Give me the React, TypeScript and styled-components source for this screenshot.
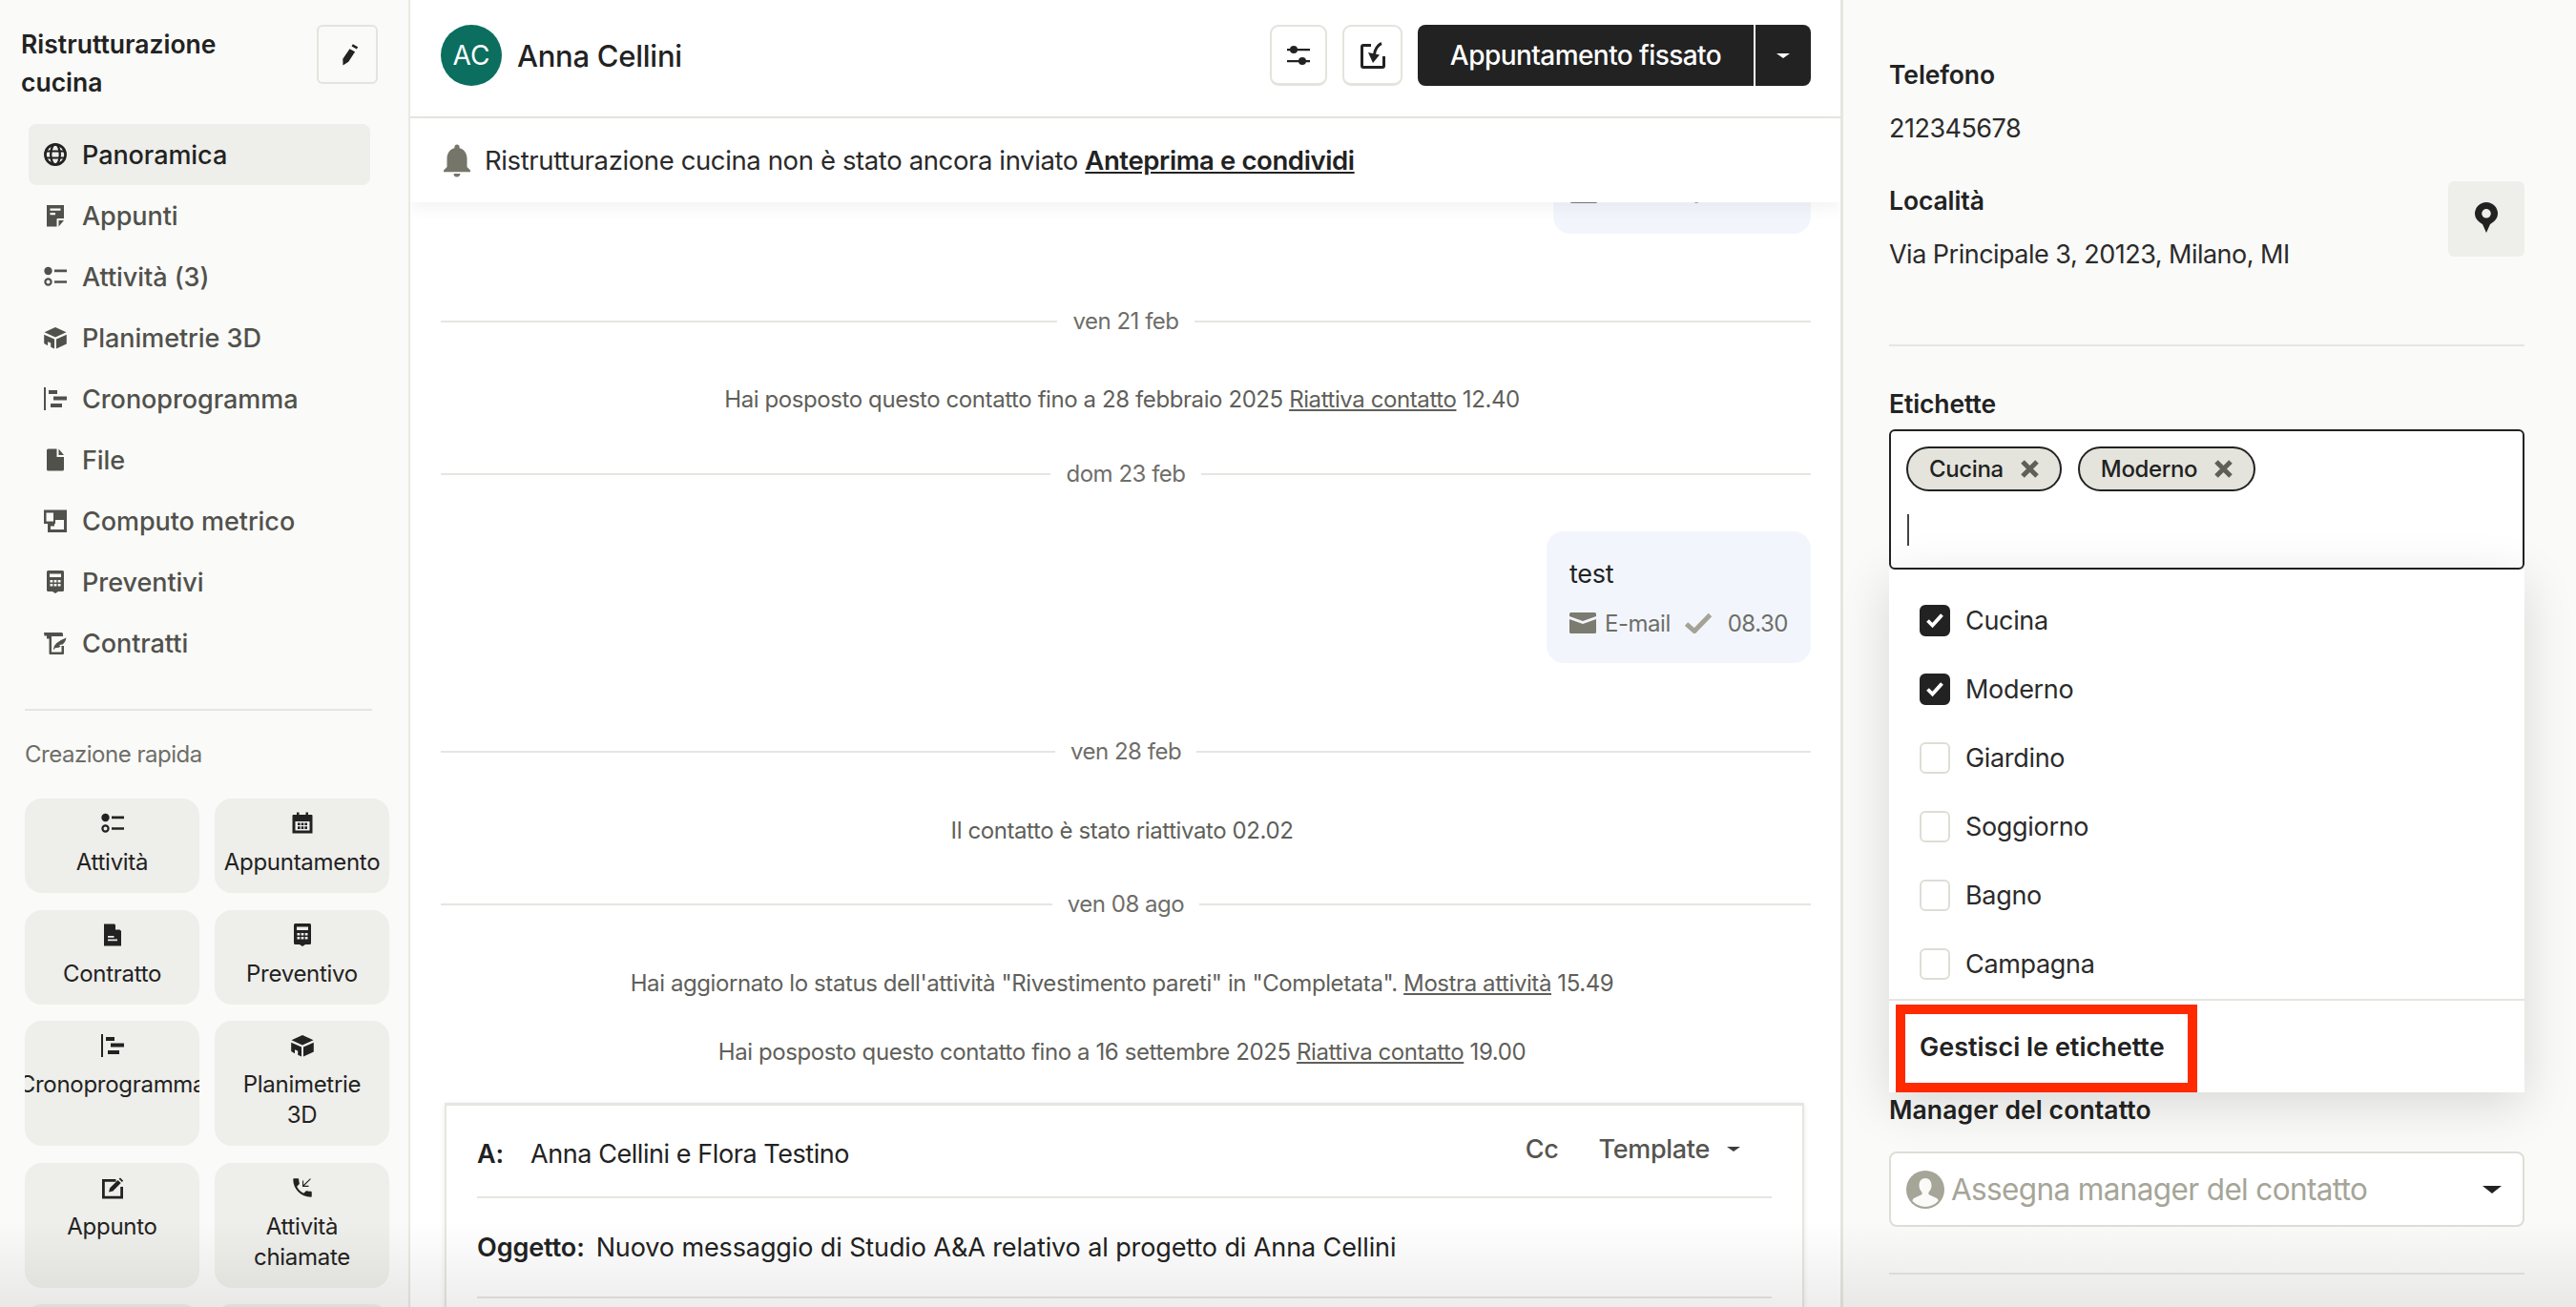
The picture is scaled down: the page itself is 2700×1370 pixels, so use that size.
import React, { FC, ReactNode } from 'react'
import styled, { createGlobalStyle } from 'styled-components'
import { MdPhoneCallback, MdNotifications } from 'react-icons/md'

const GlobalStyle = createGlobalStyle`
  html, body {
    margin: 0;
    height: 100%;
    overflow: hidden;
    background: #fff;
  }
  body {
    font-family: Inter, "Noto Sans", "Liberation Sans", sans-serif;
    font-size: 26px;
    letter-spacing: -0.01em;
    color: #222;
  }
  * { box-sizing: border-box; }
`

const Page = styled.div`
  position: relative;
  display: grid;
  grid-template-columns: 430px 1502px 768px;
  width: 2700px;
  height: 1370px;
  overflow: hidden;
`

/* bottom fade that sits over all the columns */
const BottomFade = styled.div`
  position: absolute;
  left: 0;
  right: 0;
  bottom: 0;
  height: 90px;
  background: linear-gradient(rgba(0, 0, 0, 0), rgba(0, 0, 0, 0.07));
  pointer-events: none;
  z-index: 5;
`

/* sidebar */
const Sidebar = styled.aside`
  background: #fafaf8;
  border-right: 2px solid #e9e8e3;
  overflow: hidden;
`

const SideHead = styled.div`
  display: flex;
  justify-content: space-between;
  align-items: flex-start;
  padding: 26px 32px 0 22px;
  height: 130px;
`

const ProjectTitle = styled.h1`
  margin: 0;
  width: 250px;
  font-size: 26.5px;
  line-height: 40px;
  font-weight: 600;
  letter-spacing: 0;
`

const EditBtn = styled.button`
  width: 64px;
  height: 62px;
  display: flex;
  align-items: center;
  justify-content: center;
  background: #fafaf8;
  border: 2px solid #e4e3dd;
  border-radius: 6px;
  color: #222;
  padding: 0;
`

const Nav = styled.nav`
  display: flex;
  flex-direction: column;
  width: 358px;
  margin-left: 30px;
`

const NavItem = styled.a<{ $active?: boolean }>`
  display: flex;
  align-items: center;
  gap: 16px;
  height: 64px;
  padding-left: 16px;
  border-radius: 8px;
  font-size: 27px;
  font-weight: 500;
  letter-spacing: -0.002em;
  color: ${(p) => (p.$active ? '#222' : '#51514c')};
  background: ${(p) => (p.$active ? '#eeeeea' : 'transparent')};
`

const SideRule = styled.hr`
  margin: 37px 38px 0 26px;
  border: 0;
  border-top: 2px solid #e6e5e0;
`

const QuickTitle = styled.div`
  margin: 29px 0 29px 26px;
  font-size: 24px;
  line-height: 34px;
  letter-spacing: -0.02em;
  color: #6e6e69;
`

const QuickGrid = styled.div`
  display: grid;
  grid-template-columns: 183px 183px;
  column-gap: 16px;
  row-gap: 17.5px;
  margin-left: 26px;
`

const QuickCard = styled.button<{ $tall?: boolean }>`
  display: flex;
  flex-direction: column;
  align-items: center;
  height: ${(p) => (p.$tall ? 131 : 99)}px;
  padding: 14px 14px 0;
  background: #eeeeea;
  border: 0;
  border-radius: 18px;
  overflow: hidden;
  color: #222;
  font: inherit;
  letter-spacing: -0.012em;
  font-size: 24px;
  line-height: 32px;
  text-align: center;
`

const QuickLabel = styled.span`
  margin-top: 13px;
`

/* main column */
const Main = styled.main`
  display: flex;
  flex-direction: column;
  min-width: 0;
  background: #fff;
  border-right: 3px solid #e6e5df;
  overflow: hidden;
`

const Header = styled.header`
  display: flex;
  align-items: center;
  height: 124px;
  flex: none;
  padding: 0 31px 6px 32px;
  border-bottom: 2px solid #e6e5e0;
  gap: 16px;
`

const Avatar = styled.div`
  width: 64px;
  height: 64px;
  border-radius: 50%;
  background: #0b6e5f;
  color: #fff;
  font-size: 28px;
  display: flex;
  align-items: center;
  justify-content: center;
  letter-spacing: 0;
`

const ContactName = styled.div`
  flex: 1;
  font-size: 31px;
  font-weight: 500;
`

const IconBtn = styled.button<{ $w: number }>`
  width: ${(p) => p.$w}px;
  height: 64px;
  display: flex;
  align-items: center;
  justify-content: center;
  padding: 0;
  background: #fff;
  border: 2px solid #e4e3dd;
  border-bottom-width: 3px;
  border-radius: 9px;
  color: #222;
`

const SplitBtn = styled.div`
  display: flex;
  height: 64px;
  gap: 2px;
  background: #fff;
`

const StatusBtn = styled.button`
  width: 352px;
  background: #222;
  color: #fff;
  border: 0;
  border-radius: 8px 0 0 8px;
  font: inherit;
  font-size: 28px;
  font-weight: 500;
  letter-spacing: -0.02em;
`

const StatusCaret = styled.button`
  width: 58px;
  background: #222;
  color: #fff;
  border: 0;
  border-radius: 0 8px 8px 0;
  display: flex;
  align-items: center;
  justify-content: center;
`

const Caret = styled.i<{ $w: number; $c?: string }>`
  display: inline-block;
  width: 0;
  height: 0;
  border-left: ${(p) => p.$w}px solid transparent;
  border-right: ${(p) => p.$w}px solid transparent;
  border-top: ${(p) => Math.round(p.$w * 0.75)}px solid ${(p) => p.$c ?? 'currentColor'};
`

const Notice = styled.div`
  position: relative;
  z-index: 2;
  flex: none;
  display: flex;
  align-items: center;
  gap: 8px;
  height: 88px;
  padding: 0 32px 0 28px;
  background: #fff;
  box-shadow: 0 6px 16px rgba(0, 0, 0, 0.05);
  font-size: 27.5px;
  letter-spacing: -0.014em;
  color: #2a2a2a;
`

const NoticeLink = styled.a`
  font-weight: 600;
  text-decoration: underline;
  color: #222;
`

const Feed = styled.div`
  flex: 1;
  display: flex;
  flex-direction: column;
  padding: 0 31px 0 32px;
  min-height: 0;
`

const BubbleStub = styled.div`
  align-self: flex-end;
  width: 270px;
  height: 33px;
  overflow: hidden;
  flex: none;
  background: #f2f6fc;
  border-radius: 0 0 18px 18px;
  padding: 0 18px;
`

const StubMeta = styled.div`
  margin-top: -43px;
`

const DayRow = styled.div<{ $top: number }>`
  display: flex;
  align-items: center;
  gap: 16px;
  margin-top: ${(p) => p.$top}px;
  flex: none;
  font-size: 24px;
  line-height: 34px;
  letter-spacing: -0.02em;
  color: #6e6e69;
  &::before,
  &::after {
    content: '';
    flex: 1;
    border-top: 2px solid #e6e5e0;
  }
`

const LogLine = styled.div<{ $top: number }>`
  margin-top: ${(p) => p.$top}px;
  padding-right: 8px;
  flex: none;
  text-align: center;
  font-size: 24px;
  line-height: 34px;
  letter-spacing: -0.017em;
  color: #5f5f5a;
  a {
    text-decoration: underline;
  }
`

const Bubble = styled.div`
  align-self: flex-end;
  flex: none;
  width: 277px;
  height: 138px;
  margin-top: 43px;
  padding: 27px 24px 0;
  background: #f2f6fc;
  border-radius: 18px;
`

const BubbleText = styled.div`
  font-size: 27px;
  line-height: 36px;
  color: #222;
`

const BubbleMeta = styled.div`
  display: flex;
  align-items: center;
  margin-top: 16px;
  height: 34px;
  font-size: 24px;
  letter-spacing: -0.02em;
  color: #6e6e69;
`

const MetaLabel = styled.span`
  margin-left: 9px;
  width: 85px;
`

const MetaTime = styled.span`
  margin-left: 17px;
`

const Composer = styled.section`
  flex: none;
  margin: 36px 7px 0 4px;
  padding: 0 32px;
  height: 300px;
  border: 2px solid #e6e5e0;
  border-top-width: 3px;
  box-shadow: 0 1px 6px rgba(0, 0, 0, 0.08);
  background: #fff;
`

const ComposerRow = styled.div<{ $h: number; $pt?: number }>`
  display: flex;
  align-items: center;
  height: ${(p) => p.$h}px;
  padding-top: ${(p) => p.$pt ?? 0}px;
  border-bottom: 2px solid #e6e5e0;
  font-size: 27px;
  letter-spacing: -0.004em;
`

const FieldKey = styled.strong<{ $w?: number }>`
  font-weight: 600;
  width: ${(p) => (p.$w ? `${p.$w}px` : 'auto')};
  margin-right: ${(p) => (p.$w ? 0 : 12)}px;
`

const Recipients = styled.span`
  letter-spacing: -0.016em;
`

const ComposerTools = styled.div`
  margin-left: auto;
  margin-top: -10px;
  margin-right: 33px;
  display: flex;
  align-items: center;
  color: #55554f;
  font-weight: 500;
  letter-spacing: -0.012em;
`

const ToolLabel = styled.span<{ $gap: number }>`
  margin-right: ${(p) => p.$gap}px;
`

/* right panel */
const Panel = styled.aside`
  background: #fafaf8;
  padding: 61px 54px 0 48px;
  overflow: hidden;
`

const PanelLabel = styled.div`
  font-size: 26.5px;
  line-height: 34px;
  font-weight: 600;
  letter-spacing: -0.004em;
  color: #222;
`

const PanelValue = styled.div`
  margin-top: 23px;
  font-size: 27px;
  line-height: 34px;
  letter-spacing: -0.019em;
  color: #2b2b2b;
`

const LocationRow = styled.div`
  display: flex;
  justify-content: space-between;
  margin-top: 41px;
`

const MapBtn = styled.button`
  width: 80px;
  height: 79px;
  margin-top: -3px;
  display: flex;
  align-items: center;
  justify-content: center;
  padding: 0 0 4px;
  border: 0;
  border-radius: 6px;
  background: #eeeeea;
  color: #222;
`

const PanelRule = styled.hr<{ $top: number }>`
  margin: ${(p) => p.$top}px 0 0;
  border: 0;
  border-top: 2px solid #e6e5e0;
`

const TagLabel = styled(PanelLabel)`
  margin: 43px 0 10px;
`

const TagBox = styled.div`
  position: relative;
`

const TagField = styled.div`
  height: 147px;
  padding: 16px 16px;
  background: #fff;
  border: 2px solid #222;
  border-radius: 6px;
`

const Chips = styled.div`
  display: flex;
  gap: 17px;
`

const Chip = styled.span`
  display: flex;
  align-items: center;
  gap: 18px;
  height: 47px;
  padding: 0 22px;
  background: #e4e4dc;
  border: 2px solid #222;
  border-radius: 24px;
  font-size: 24px;
  font-weight: 500;
  letter-spacing: -0.015em;
`

const TextCursor = styled.div`
  width: 2px;
  height: 33px;
  margin: 24px 0 0 1px;
  background: #444;
`

const Dropdown = styled.div`
  position: absolute;
  z-index: 3;
  top: 100%;
  left: 0;
  right: 0;
  height: 548px;
  background: #fff;
  padding-top: 17px;
  box-shadow: 0 12px 50px rgba(0, 0, 0, 0.14);
`

const Option = styled.label`
  display: flex;
  align-items: center;
  gap: 16px;
  height: 72px;
  padding-left: 32px;
  font-size: 27px;
  letter-spacing: -0.012em;
  color: #2b2b2b;
`

const Box = styled.span<{ $on?: boolean }>`
  width: 32px;
  height: 33px;
  display: flex;
  align-items: center;
  justify-content: center;
  border-radius: 6px;
  background: ${(p) => (p.$on ? '#222' : '#fff')};
  border: 2px solid ${(p) => (p.$on ? '#222' : '#deddd6')};
`

const ManageRow = styled.div`
  position: relative;
  display: flex;
  align-items: center;
  height: 98px;
  margin-top: 1px;
  padding: 0 32px 0;
  border-top: 2px solid #e6e5e0;
  font-size: 27px;
  font-weight: 600;
  letter-spacing: 0;
`

/* annotation drawn on the screenshot */
const RedMark = styled.div`
  position: absolute;
  left: 7px;
  bottom: 0;
  width: 316px;
  height: 92px;
  border: 10px solid #ff2a00;
`

const ManagerLabel = styled(PanelLabel)`
  margin-top: 549px;
  letter-spacing: 0.004em;
`

const ManagerSelect = styled.div`
  display: flex;
  align-items: center;
  gap: 7px;
  height: 79px;
  margin-top: 27px;
  padding: 0 22px 0 16px;
  background: #fff;
  border: 2px solid #deddd6;
  border-radius: 8px;
  font-size: 31.5px;
  letter-spacing: -0.02em;
  color: #a5a598;
`

const Placeholder = styled.span`
  flex: 1;
`

/* icons */
const Ico: FC<{ s?: number; children: ReactNode }> = ({ s = 24, children }) => (
  <svg width={s} height={s} viewBox="0 0 24 24" fill="currentColor" style={{ flex: 'none' }}>
    {children}
  </svg>
)

const GlobeIcon = () => (
  <Ico>
    <circle cx="12" cy="12" r="10.6" fill="none" stroke="currentColor" strokeWidth="2.7" />
    <ellipse cx="12" cy="12" rx="4.8" ry="10.6" fill="none" stroke="currentColor" strokeWidth="2.3" />
    <path d="M2 7.4h20v2.2H2zM2 14.4h20v2.2H2z" />
  </Ico>
)
const NoteIcon = () => (
  <Ico>
    <path
      fillRule="evenodd"
      d="M3 1h18v14h-6.5q-1 0-1 1v7.5H3zM6.5 4.5v2.300h11V4.500zM6.5 9v2.300h5.500V9zM15.500 17H21l-5.500 6.500z"
    />
  </Ico>
)
const TasksIcon = () => (
  <Ico>
    <circle cx="4.5" cy="6" r="4.2" />
    <circle cx="4.5" cy="17.5" r="3.1" fill="none" stroke="currentColor" strokeWidth="2.2" />
    <path d="M11 4.6h13v2.6H11zM11 16.2h13v2.6H11z" />
  </Ico>
)
const CubeIcon = () => (
  <Ico>
    <path d="M12 1l11.5 5.3L12 11.6.5 6.3zM.2 8.800L11 13.600V23.500l-3.800-1.700v-4.200l-3.200-1.400v4.100L.2 18zM23.800 8.800L13 13.600v9.900l10.800-5z" />
  </Ico>
)
const GanttIcon = () => (
  <Ico>
    <path d="M0 0h2v24H0zM5 3h9v4H5zM10 9.5h14v4H10zM7 17h12v4H7z" />
  </Ico>
)
const FileIcon = () => (
  <Ico>
    <path d="M4.5.5h9V9h7.500v13q0 1.500-1.500 1.500h-15Q3 23.500 3 22V2Q3 .5 4.500.5zM15.500.5L21 7h-5.500z" />
  </Ico>
)
const PlanIcon = () => (
  <Ico>
    <path fillRule="evenodd" d="M0 .5h24v23.500H4V15H0zM2.500 3.500V12.500H10V3.500zM12 11v4H7v6h14V11z" />
    <path d="M5 15h6v2.500H5z" />
  </Ico>
)
const CalcIcon = () => (
  <Ico>
    <path
      fillRule="evenodd"
      d="M4.500 0h15Q21 0 21 1.500v19q0 1.500-1.500 1.500H15l-3 2-3-2H4.500Q3 22 3 20.500v-19Q3 0 4.500 0zM6 3.500V7h12V3.500zM6.500 10v2.500h2.800V10zM10.600 10v2.500h2.800V10zM14.700 10v2.500h2.800V10zM6.500 14v2.500h2.800V14zM10.600 14v2.500h2.800V14zM14.700 14v2.500h2.800V14z"
    />
  </Ico>
)
const ContractIcon = () => (
  <Ico>
    <path d="M0 1h18.500q1.500 0 1.500 1.500V5H8v16.500h10.500V15H21v8q0 1-1 1H6.500q-1 0-1-1V7.500H3V4.500H.5z" />
    <path d="M10 18.500q0-7 13.500-12-1 5-4 7l-3.500.5 1.500 1.500q-2 2-5.500 1.500L10.700 19z" />
  </Ico>
)
const PencilIcon = () => (
  <Ico>
    <path d="M14.500 6.200l5.600 3.100-6.800 10.400-5.800 3.800-.2-6.800zM16.500 3.400l1.300-2.200 5.400 3.100-1.300 2.200z" />
  </Ico>
)
const CalendarIcon = () => (
  <Ico>
    <path
      fillRule="evenodd"
      d="M6 .5h2.500V3h7V.5H18V3h3.500q1 0 1 1v18.500h-21V4q0-1 1-1H6zM4.500 10v9.500h15V10zM7 11.500h2.600v2.600H7zM10.700 11.500h2.600v2.600h-2.600zM14.400 11.500H17v2.600h-2.600zM7 15.300h2.600v2.600H7zM10.700 15.300h2.600v2.600h-2.600zM14.400 15.300H17v2.600h-2.600z"
    />
  </Ico>
)
const DocIcon = () => (
  <Ico>
    <path fillRule="evenodd" d="M3 .5h11L21 8v15.500H3zM7 13v1.800h6.500V13zM7 16.500v1.800h10v-1.800z" />
    <path d="M15 1l5 5.500h-5z" fill="#eeeeea" />
  </Ico>
)
const EditSquareIcon = () => (
  <Ico>
    <path d="M1 3h14.500v2.800H3.800v14.900h16.400V11H23v12.500H1z" />
    <path d="M8 16.500l1.200-4.300 8.300-8.300 3.200 3.200-8.300 8.300zM18.700 2.700L20 1.500l3.200 3.200-1.300 1.300z" />
  </Ico>
)
const SlidersIcon = () => (
  <Ico>
    <path d="M0 5h24v2.200H0zM0 17h24v2.200H0z" />
    <circle cx="7" cy="6" r="4" />
    <circle cx="16" cy="18" r="4" />
  </Ico>
)
const ImportIcon = () => (
  <svg width="28" height="28" viewBox="0 0 28 28" style={{ flex: 'none' }}>
    <path d="M12 3.500H4Q2.500 3.500 2.500 5v20q0 1.500 1.500 1.500h20q1.500 0 1.500-1.500V15" fill="none" stroke="currentColor" strokeWidth="3" />
    <path d="M23 1.500C19 3 16 8 15.500 13" fill="none" stroke="currentColor" strokeWidth="3" />
    <path d="M9 11l12 2.500-7 8.500z" fill="currentColor" />
  </svg>
)
const PinIcon = () => (
  <svg width="24" height="32" viewBox="0 0 24 32" fill="currentColor" style={{ flex: 'none' }}>
    <path
      fillRule="evenodd"
      d="M12 0a12 12 0 0 1 12 12c0 6-5 9-8 11l-4 9-4-9c-3-2-8-5-8-11A12 12 0 0 1 12 0zM12 7a4.800 4.800 0 1 0 0 9.600A4.800 4.800 0 0 0 12 7z"
    />
  </svg>
)
const MailIcon = () => (
  <svg width="28" height="22" viewBox="0 0 28 22" style={{ flex: 'none' }}>
    <path fill="#7c7b70" d="M0 1.500Q0 0 1.500 0h25Q28 0 28 1.500V4L14 9 0 4zM0 7l14 5 14-5v13.500q0 1.500-1.500 1.500h-25Q0 22 0 20.500z" />
  </svg>
)
const SeenIcon = () => (
  <svg width="28" height="22" viewBox="0 0 28 22" style={{ flex: 'none' }}>
    <path d="M1.500 12l8.500 7.500L26.500 2.500" fill="none" stroke="#a5a395" strokeWidth="5" />
  </svg>
)
const TickIcon = () => (
  <svg width="22" height="22" viewBox="0 0 22 22">
    <path d="M3.500 11.500l5 5 10-11" fill="none" stroke="#fff" strokeWidth="3.800" />
  </svg>
)
const CrossIcon = () => (
  <svg width="19" height="19" viewBox="0 0 19 19" style={{ flex: 'none' }}>
    <path d="M2 2l15 15M17 2L2 17" fill="none" stroke="#5f5f58" strokeWidth="5" />
  </svg>
)
const PersonIcon = () => (
  <svg width="40" height="40" viewBox="0 0 40 40" style={{ flex: 'none' }}>
    <circle cx="20" cy="20" r="20" fill="#a5a598" />
    <path
      fill="#fafaf8"
      d="M20 8c4 0 6.500 3 6.500 7.500 0 3-1.200 5.500-3 7v2.500l8.500 4c1 .5 1.500 1.500 1.500 3A20 20 0 0 1 20 38a20 20 0 0 1-13.500-6c0-1.500.5-2.500 1.500-3l8.500-4v-2.500c-1.800-1.500-3-4-3-7C13.500 11 16 8 20 8z"
    />
  </svg>
)

const navItems = [
  { label: 'Panoramica', icon: <GlobeIcon />, active: true },
  { label: 'Appunti', icon: <NoteIcon /> },
  { label: 'Attività (3)', icon: <TasksIcon /> },
  { label: 'Planimetrie 3D', icon: <CubeIcon /> },
  { label: 'Cronoprogramma', icon: <GanttIcon /> },
  { label: 'File', icon: <FileIcon /> },
  { label: 'Computo metrico', icon: <PlanIcon /> },
  { label: 'Preventivi', icon: <CalcIcon /> },
  { label: 'Contratti', icon: <ContractIcon /> },
]

const quickItems = [
  { label: 'Attività', icon: <TasksIcon /> },
  { label: 'Appuntamento', icon: <CalendarIcon /> },
  { label: 'Contratto', icon: <DocIcon /> },
  { label: 'Preventivo', icon: <CalcIcon /> },
  { label: 'Cronoprogramma', icon: <GanttIcon />, tall: true },
  { label: 'Planimetrie 3D', icon: <CubeIcon />, tall: true },
  { label: 'Appunto', icon: <EditSquareIcon />, tall: true },
  { label: 'Attività chiamate', icon: <MdPhoneCallback size={26} style={{ margin: '-1px 0' }} />, tall: true },
  { label: '', icon: null, tall: true },
  { label: '', icon: null, tall: true },
]

const tagOptions = [
  { label: 'Cucina', on: true },
  { label: 'Moderno', on: true },
  { label: 'Giardino' },
  { label: 'Soggiorno' },
  { label: 'Bagno' },
  { label: 'Campagna' },
]

const MessageMeta = () => (
  <BubbleMeta>
    <MailIcon />
    <MetaLabel>E-mail</MetaLabel>
    <SeenIcon />
    <MetaTime>08.30</MetaTime>
  </BubbleMeta>
)

export default function App() {
  return (
    <Page>
      <GlobalStyle />
      <Sidebar>
        <SideHead>
          <ProjectTitle>Ristrutturazione cucina</ProjectTitle>
          <EditBtn>
            <PencilIcon />
          </EditBtn>
        </SideHead>
        <Nav>
          {navItems.map((item) => (
            <NavItem key={item.label} $active={item.active}>
              {item.icon}
              {item.label}
            </NavItem>
          ))}
        </Nav>
        <SideRule />
        <QuickTitle>Creazione rapida</QuickTitle>
        <QuickGrid>
          {quickItems.map((item, i) => (
            <QuickCard key={i} $tall={item.tall}>
              {item.icon}
              <QuickLabel>{item.label}</QuickLabel>
            </QuickCard>
          ))}
        </QuickGrid>
      </Sidebar>

      <Main>
        <Header>
          <Avatar>AC</Avatar>
          <ContactName>Anna Cellini</ContactName>
          <IconBtn $w={60}>
            <SlidersIcon />
          </IconBtn>
          <IconBtn $w={63}>
            <ImportIcon />
          </IconBtn>
          <SplitBtn>
            <StatusBtn>Appuntamento fissato</StatusBtn>
            <StatusCaret>
              <Caret $w={7} />
            </StatusCaret>
          </SplitBtn>
        </Header>
        <Notice>
          <MdNotifications size={42} color="#76756a" />
          <span>
            Ristrutturazione cucina non è stato ancora inviato <NoticeLink>Anteprima e condividi</NoticeLink>
          </span>
        </Notice>
        <Feed>
          <BubbleStub>
            <StubMeta>
              <MessageMeta />
            </StubMeta>
          </BubbleStub>
          <DayRow $top={75}>ven 21 feb</DayRow>
          <LogLine $top={48}>
            Hai posposto questo contatto fino a 28 febbraio 2025 <a>Riattiva contatto</a> 12.40
          </LogLine>
          <DayRow $top={44}>dom 23 feb</DayRow>
          <Bubble>
            <BubbleText>test</BubbleText>
            <MessageMeta />
          </Bubble>
          <DayRow $top={76}>ven 28 feb</DayRow>
          <LogLine $top={49}>Il contatto è stato riattivato 02.02</LogLine>
          <DayRow $top={43}>ven 08 ago</DayRow>
          <LogLine $top={49}>
            Hai aggiornato lo status dell'attività "Rivestimento pareti" in "Completata". <a>Mostra attività</a> 15.49
          </LogLine>
          <LogLine $top={38}>
            Hai posposto questo contatto fino a 16 settembre 2025 <a>Riattiva contatto</a> 19.00
          </LogLine>
          <Composer>
            <ComposerRow $h={97} $pt={6}>
              <FieldKey $w={56}>A:</FieldKey>
              <Recipients>Anna Cellini e Flora Testino</Recipients>
              <ComposerTools>
                <ToolLabel $gap={42}>Cc</ToolLabel>
                <ToolLabel $gap={18}>Template</ToolLabel>
                <Caret $w={7} $c="#3c3c38" />
              </ComposerTools>
            </ComposerRow>
            <ComposerRow $h={105}>
              <FieldKey>Oggetto:</FieldKey>
              Nuovo messaggio di Studio A&amp;A relativo al progetto di Anna Cellini
            </ComposerRow>
          </Composer>
        </Feed>
      </Main>

      <Panel>
        <PanelLabel>Telefono</PanelLabel>
        <PanelValue>212345678</PanelValue>
        <LocationRow>
          <div>
            <PanelLabel>Località</PanelLabel>
            <PanelValue>Via Principale 3, 20123, Milano, MI</PanelValue>
          </div>
          <MapBtn>
            <PinIcon />
          </MapBtn>
        </LocationRow>
        <PanelRule $top={77} />
        <TagLabel>Etichette</TagLabel>
        <TagBox>
          <TagField>
            <Chips>
              <Chip>
                Cucina <CrossIcon />
              </Chip>
              <Chip>
                Moderno <CrossIcon />
              </Chip>
            </Chips>
            <TextCursor />
          </TagField>
          <Dropdown>
            {tagOptions.map((o) => (
              <Option key={o.label}>
                <Box $on={o.on}>{o.on && <TickIcon />}</Box>
                {o.label}
              </Option>
            ))}
            <ManageRow>
              Gestisci le etichette
              <RedMark />
            </ManageRow>
          </Dropdown>
        </TagBox>
        <ManagerLabel>Manager del contatto</ManagerLabel>
        <ManagerSelect>
          <PersonIcon />
          <Placeholder>Assegna manager del contatto</Placeholder>
          <Caret $w={10} $c="#222" />
        </ManagerSelect>
        <PanelRule $top={48} />
      </Panel>
      <BottomFade />
    </Page>
  )
}
